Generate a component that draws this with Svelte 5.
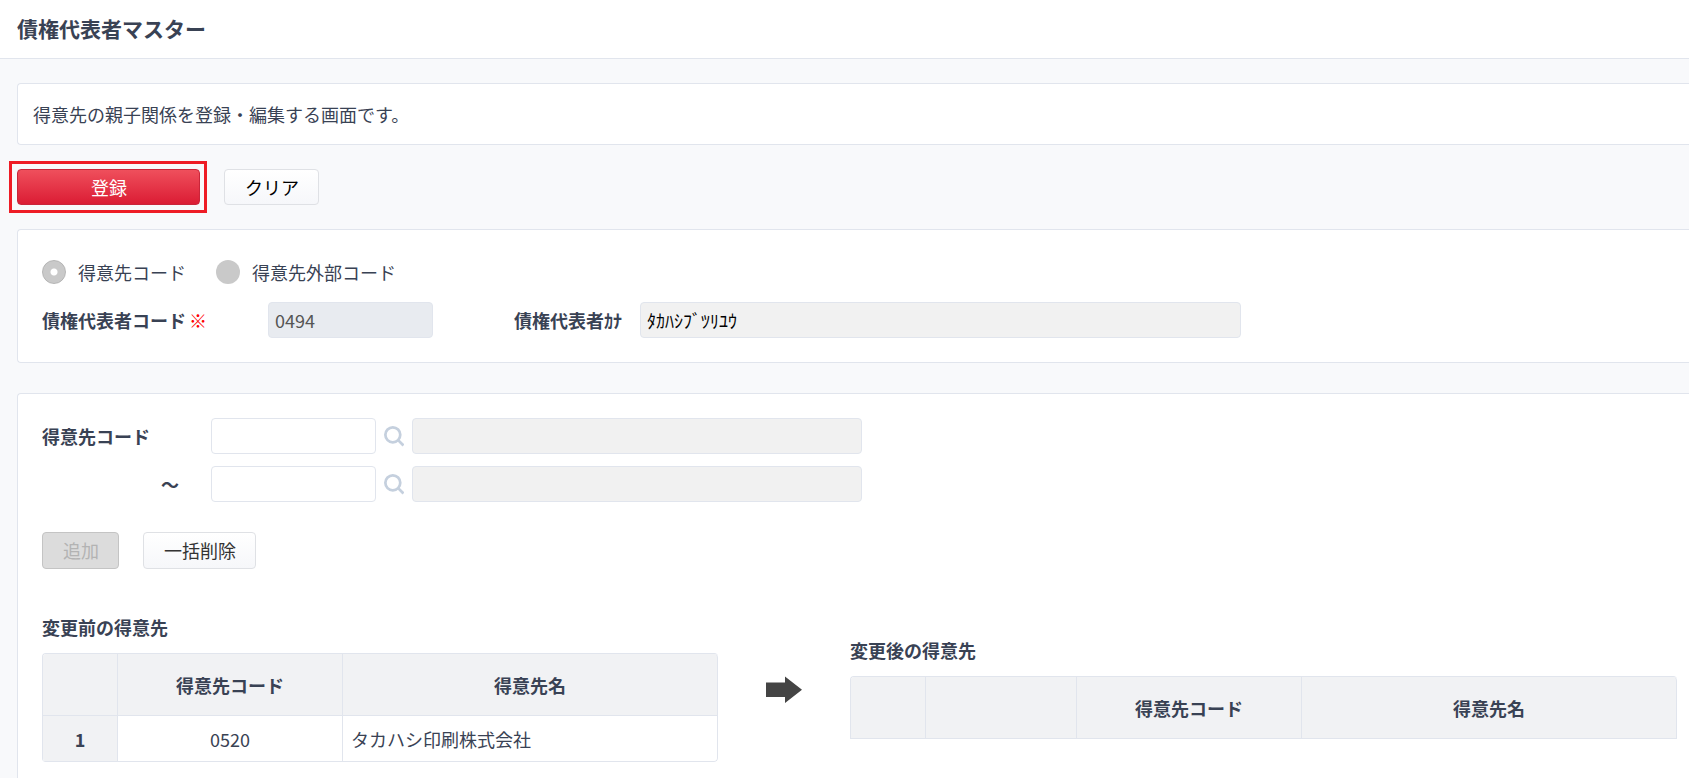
<script>
  let codeType = $state('code');
  let from = $state('');
  let to = $state('');
  const customers = [{ code: '0520', name: 'タカハシ印刷株式会社' }];
</script>

{#snippet searchIcon()}
  <svg width="22" height="22" viewBox="0 0 22 22" fill="none" stroke="#c5d0de" aria-hidden="true">
    <circle cx="9.7" cy="9.7" r="8.2" stroke-width="3" />
    <path d="M15 15 21.4 21.4" stroke-width="3" />
  </svg>
{/snippet}

<div class="page">
  <header><h1>債権代表者マスター</h1></header>

  <main>
    <p class="panel intro">得意先の親子関係を登録・編集する画面です。</p>

    <div class="actions">
      <div class="highlight"><button class="btn primary" type="button">登録</button></div>
      <button class="btn" type="button">クリア</button>
    </div>

    <section class="panel representative">
      <div class="radios">
        <label><input type="radio" name="codeType" value="code" bind:group={codeType} disabled />得意先コード</label>
        <label><input type="radio" name="codeType" value="external" bind:group={codeType} disabled />得意先外部コード</label>
      </div>
      <div class="fields">
        <label class="name wide" for="rep-code">債権代表者コード<span class="required">※</span></label>
        <input class="box code locked" id="rep-code" type="text" value="0494" disabled />
        <label class="name kana" for="rep-kana">債権代表者ｶﾅ</label>
        <input class="box kana-box" id="rep-kana" type="text" value="ﾀｶﾊｼﾌﾞﾂﾘﾕｳ" readonly />
      </div>
    </section>

    <section class="panel customers">
      <div class="range">
        <label class="name" for="from">得意先コード</label>
        <input class="box code" id="from" type="text" bind:value={from} />
        <button class="search" type="button" aria-label="検索">{@render searchIcon()}</button>
        <input class="box result" type="text" aria-label="得意先名" readonly />

        <label class="name tilde" for="to">～</label>
        <input class="box code" id="to" type="text" bind:value={to} />
        <button class="search" type="button" aria-label="検索">{@render searchIcon()}</button>
        <input class="box result" type="text" aria-label="得意先名" readonly />
      </div>

      <div class="edit">
        <button class="btn small" type="button" disabled>追加</button>
        <button class="btn dark small" type="button">一括削除</button>
      </div>

      <div class="compare">
        <div>
          <h2>変更前の得意先</h2>
          <table>
            <colgroup><col class="no" /><col class="c-code" /><col class="c-name" /></colgroup>
            <thead>
              <tr><th></th><th>得意先コード</th><th>得意先名</th></tr>
            </thead>
            <tbody>
              {#each customers as customer, i}
                <tr><th scope="row">{i + 1}</th><td class="center">{customer.code}</td><td>{customer.name}</td></tr>
              {/each}
            </tbody>
          </table>
        </div>

        <svg class="arrow" width="36" height="28" viewBox="0 0 36 28" fill="#444" aria-hidden="true">
          <path d="M0 6.5H19V0.5L36 13.7 19 27V21H0Z" />
        </svg>

        <div>
          <h2>変更後の得意先</h2>
          <table class="empty">
            <colgroup><col class="no" /><col class="c-action" /><col class="c-code" /><col class="c-name" /></colgroup>
            <thead>
              <tr><th></th><th></th><th>得意先コード</th><th>得意先名</th></tr>
            </thead>
          </table>
        </div>
      </div>
    </section>
  </main>
</div>

<style>
  :global(body) {
    margin: 0;
    background: #f8f9fb;
  }
  .page {
    display: flex;
    flex-direction: column;
    min-height: 100vh;
    overflow: hidden;
    box-sizing: border-box;
    color: #394254;
    font: 18px/26px "Noto Sans CJK JP", sans-serif;
  }
  .page * {
    box-sizing: border-box;
  }
  header {
    padding: 13px 17px 15px;
    background: #fff;
    border-bottom: 1px solid #e1e5ed;
  }
  h1 {
    margin: 0;
    font-size: 21px;
    line-height: 30px;
  }
  main {
    flex: 1;
    display: flex;
    flex-direction: column;
    padding: 24px 0 0 17px;
  }
  .panel {
    margin: 0;
    background: #fff;
    border: 1px solid #e1e5ed;
    border-right: 0;
    border-radius: 4px 0 0 4px;
  }
  .intro {
    padding: 17px 15px;
  }
  .actions {
    display: flex;
    align-items: center;
    gap: 17px;
    margin: 16px 0 16px -8px;
  }
  .highlight {
    display: flex;
    padding: 5px 4px 5px 5px;
    border: 3px solid #ee1c25;
  }
  button,
  input {
    font: inherit;
    margin: 0;
  }
  .btn {
    height: 36px;
    padding: 0 19px 0 20px;
    color: #000;
    background: linear-gradient(#fff, #f6f7fa);
    border: 1px solid #dfe1e5;
    border-radius: 4px;
  }
  .btn.primary {
    width: 183px;
    color: #fff;
    background: linear-gradient(#ef4f5c, #db1c34);
    border-color: #c9253a;
  }
  .btn.dark {
    color: #333;
  }
  .btn.small {
    height: 37px;
    padding-bottom: 1px;
  }
  .btn:disabled {
    color: #b3b3b3;
    background: #dcdcdc;
    border-color: #c4c4c4;
  }
  .representative {
    padding: 29px 24px 24px;
  }
  .radios {
    display: flex;
    gap: 30px;
    margin-bottom: 17px;
  }
  .radios label {
    display: flex;
    align-items: center;
    gap: 12px;
  }
  .radios input {
    appearance: none;
    width: 24px;
    height: 24px;
    border-radius: 50%;
    background: #c9c9c9;
  }
  .radios input:checked {
    border: 1px solid #b5b5b5;
    background: radial-gradient(circle, #fff 3px, #c9c9c9 4px);
  }
  .fields {
    display: flex;
    align-items: center;
  }
  .name {
    font-weight: 700;
    white-space: nowrap;
  }
  .wide {
    width: 226px;
  }
  .required {
    margin-left: 3px;
    color: #f00;
  }
  .kana {
    margin: 0 18px 0 81px;
  }
  .box {
    height: 36px;
    padding: 0 6px;
    color: #000;
    background: #fff;
    border: 1px solid #e1e5ed;
    border-radius: 4px;
    outline: 0;
  }
  .box:read-only {
    background: #f1f1f1;
  }
  .box.locked {
    color: #555;
    background: #e8ebf0;
  }
  .code {
    width: 165px;
  }
  .kana-box {
    width: 601px;
  }
  .customers {
    flex: 1;
    margin-top: 30px;
    padding: 24px 11px 16px 24px;
    border-bottom: 0;
    border-bottom-left-radius: 0;
  }
  .range {
    display: grid;
    grid-template-columns: 169px 165px 36px 450px;
    row-gap: 12px;
    align-items: center;
  }
  .tilde {
    padding-right: 32px;
    text-align: right;
  }
  .search {
    display: flex;
    padding: 0 8px;
    background: none;
    border: 0;
  }
  .edit {
    display: flex;
    gap: 24px;
    margin: 30px 0 42px;
  }
  .compare {
    display: flex;
    align-items: center;
  }
  .arrow {
    flex: none;
    margin: 6px 48px 0;
  }
  h2 {
    margin: 0 0 10px;
    font-size: 18px;
    line-height: 32px;
  }
  table {
    table-layout: fixed;
    width: 676px;
    border-collapse: separate;
    border-spacing: 0;
    border: 1px solid #e1e5ed;
    border-width: 1px 0 0 1px;
    border-radius: 4px;
    overflow: hidden;
  }
  table.empty {
    width: 827px;
    border-radius: 4px 4px 0 0;
  }
  .no {
    width: 75px;
  }
  .c-action {
    width: 151px;
  }
  .c-code {
    width: 225px;
  }
  .c-name {
    width: 375px;
  }
  th,
  td {
    height: 46px;
    padding: 0 8px;
    border: 1px solid #e1e5ed;
    border-width: 0 1px 1px 0;
  }
  thead th {
    height: 62px;
  }
  th {
    background: #f1f2f4;
  }
  th:last-child {
    border-top-right-radius: 4px;
  }
  tr:last-child td:last-child {
    border-bottom-right-radius: 4px;
  }
  .center {
    text-align: center;
  }
</style>
